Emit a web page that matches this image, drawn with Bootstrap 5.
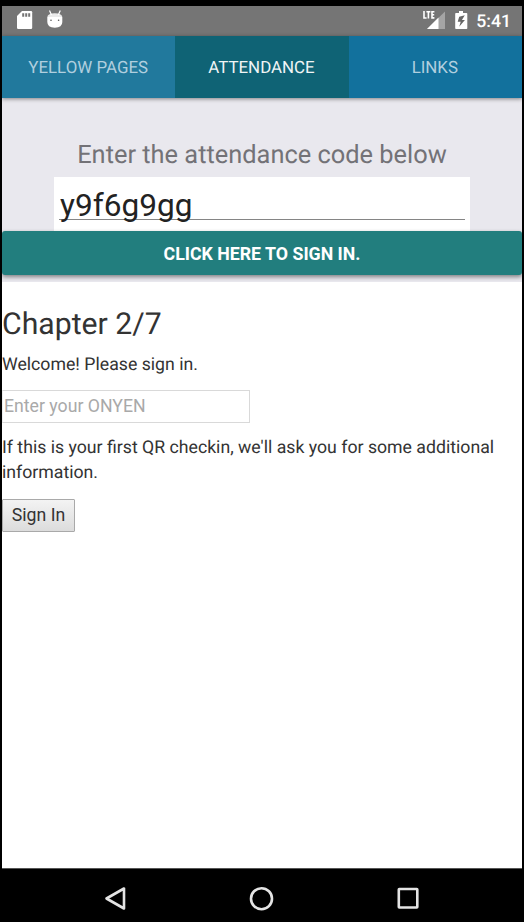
<!DOCTYPE html>
<html lang="en">
<head>
<meta charset="utf-8">
<meta name="viewport" content="width=device-width, initial-scale=1">
<title>Attendance</title>
<link href="https://cdn.jsdelivr.net/npm/bootstrap@5.3.0/dist/css/bootstrap.min.css" rel="stylesheet">
<style>
  body { font-family: Roboto, sans-serif; background: #000; color: #333; text-rendering: geometricPrecision; }
  .phone { height: 922px; padding: 6px 2px 0; }
  .statusbar { height: 30px; background: #757575; padding: 0 11px 0 14px; }
  .clock { font-size: 17.7px; font-weight: 500; line-height: 30px; padding-top: 2px; }
  .tabs { height: 62px; box-shadow: 0 1px 4px rgba(0,0,0,.45); z-index: 1; }
  .tabs .nav-link { font-size: 16.9px; line-height: 61px; padding: 2px 1px 0 0; border-radius: 0; background: #12719d; color: #b0cfdf; height: 62px; }
  .tabs .nav-link.first-tab { background: #21799d; }
  .tabs .nav-link.active { background: #0f6375; color: #f0f5f6; }
  .code-panel { height: 184px; background: #e9e8ee; }
  .prompt { font-size: 25.4px; line-height: 30px; padding-top: 42px; height: 79px; color: #737277; }
  .code-box { width: 416px; height: 54px; padding: 0 5px; }
  .code-input { height: 54px; padding: 3px 1px 0; border: 0; border-radius: 0; font-size: 31.6px; line-height: 50px; color: #222; background: linear-gradient(#858585, #858585) 0 42px / 100% 1px no-repeat; }
  .code-input:focus { box-shadow: none; }
  .btn-code { height: 44px; border-radius: 3px; padding: 2px 0 0; background: #227e7e !important; color: #fff !important; border: 0; font-size: 17.75px; font-weight: 700; line-height: 42px; box-shadow: 0 2px 4px rgba(0,0,0,.45); }
  .web { font-size: 17.7px; line-height: 25.5px; }
  .web h3 { font-size: 30.2px; line-height: 34px; font-weight: 400; padding-top: 26px; margin-bottom: 11px; }
  .web p { margin-bottom: 12.5px; }
  .onyen { width: 248px; height: 33px; padding: 0 1px; border: 1px solid #d9d9d9; border-left-color: #eee; border-radius: 0; font-size: 17.7px; margin-bottom: 13px; margin-top: -1.5px; }
  .onyen::placeholder { color: #a9a9a9; }
  .btn-sign { width: 73px; height: 33px; padding: 0; border: 1px solid #a9a9a9; border-radius: 1px; background: linear-gradient(#f3f3f3, #dcdcdc); font-size: 17.7px; line-height: 29px; color: #333; display: block; }
  .navkeys { height: 54px; border-top: 1px solid #555; background: #000; }
</style>
<script src="https://cdn.jsdelivr.net/npm/bootstrap@5.3.0/dist/js/bootstrap.bundle.min.js"></script>
</head>
<body>
<div class="phone d-flex flex-column overflow-hidden">
  <header class="statusbar d-flex align-items-center text-white flex-shrink-0">
    <svg width="48" height="30" viewBox="0 0 48 30" fill="#fff" aria-hidden="true">
      <path d="M6 5h9q1.200 0 1.200 1.200v15.600q0 1.200-1.200 1.200H2.200Q1 23 1 21.800V10z"/>
      <path d="M6.200 7.200h2v3.500h-2zm3 0h2v3.500h-2zm3 0h2v3.500h-2z" fill="#757575"/>
      <path d="M31.300 11h15v5q0 5.700-7.500 5.700t-7.500-5.700z"/>
      <path d="M33.500 4.500l2 4.500M44.300 4.500l-2 4.500" stroke="#fff" stroke-width="1.200"/>
      <path d="M31.300 11Q32 7.300 38.800 7.300T46.300 11z" opacity=".85"/>
      <circle cx="35" cy="14.200" r=".8" fill="#555"/><circle cx="42.600" cy="14.200" r=".8" fill="#555"/>
    </svg>
    <svg class="ms-auto" width="54" height="30" viewBox="0 0 54 30" fill="#fff" aria-hidden="true">
      <path d="M23 5.500V23h-18z" opacity=".35"/>
      <path d="M16.500 11.500V23H5z"/>
      <path d="M1 4v9.500h12.500V4z" fill="#757575"/>
      <path d="M2 5v7h2.600M4.400 5.700h4M6.400 5.700V12.600M12.400 5.700H10v6.200h2.400M10 8.800h2.200" fill="none" stroke="#fff" stroke-width="1.600"/>
      <path d="M37 5h4v2H44.500q.800 0 .800.800v14.400q0 .800-.800.800H34q-.800 0-.800-.800V7.800q0-.800.800-.800h3z"/>
      <path d="M42.800 9.300l-5.600 1.500-1.500 5h3l-1.500 5 5.700-6.800h-3z" fill="#666"/>
    </svg>
    <span class="clock">5:41</span>
  </header>

  <nav class="tabs nav nav-justified flex-nowrap position-relative flex-shrink-0">
    <a class="nav-link first-tab" href="#">YELLOW PAGES</a>
    <a class="nav-link active" href="#" aria-current="page">ATTENDANCE</a>
    <a class="nav-link" href="#">LINKS</a>
  </nav>

  <section class="code-panel flex-shrink-0">
    <div class="prompt text-center">Enter the attendance code below</div>
    <div class="code-box bg-white mx-auto">
      <input class="code-input form-control" type="text" value="y9f6g9gg" aria-label="Attendance code" spellcheck="false">
    </div>
    <button class="btn btn-code w-100 d-block position-relative" type="button">CLICK HERE TO SIGN IN.</button>
  </section>

  <main class="web bg-white flex-grow-1">
    <h3>Chapter 2/7</h3>
    <p>Welcome! Please sign in.</p>
    <input class="onyen form-control" type="text" placeholder="Enter your ONYEN">
    <p>If this is your first QR checkin, we'll ask you for some additional information.</p>
    <button class="btn btn-sign" type="button">Sign In</button>
  </main>

  <footer class="navkeys d-flex justify-content-center align-items-center flex-shrink-0">
    <svg width="520" height="53" viewBox="0 0 520 53" fill="none" stroke="#e4e4e4" stroke-width="2.600" stroke-linejoin="round" aria-hidden="true">
      <path d="M122 19.500v20L104.500 29.500z"/>
      <circle cx="259.500" cy="29.700" r="10.500"/>
      <rect x="396.800" y="20" width="18.500" height="18.500" rx=".5"/>
    </svg>
  </footer>
</div>
</body>
</html>
